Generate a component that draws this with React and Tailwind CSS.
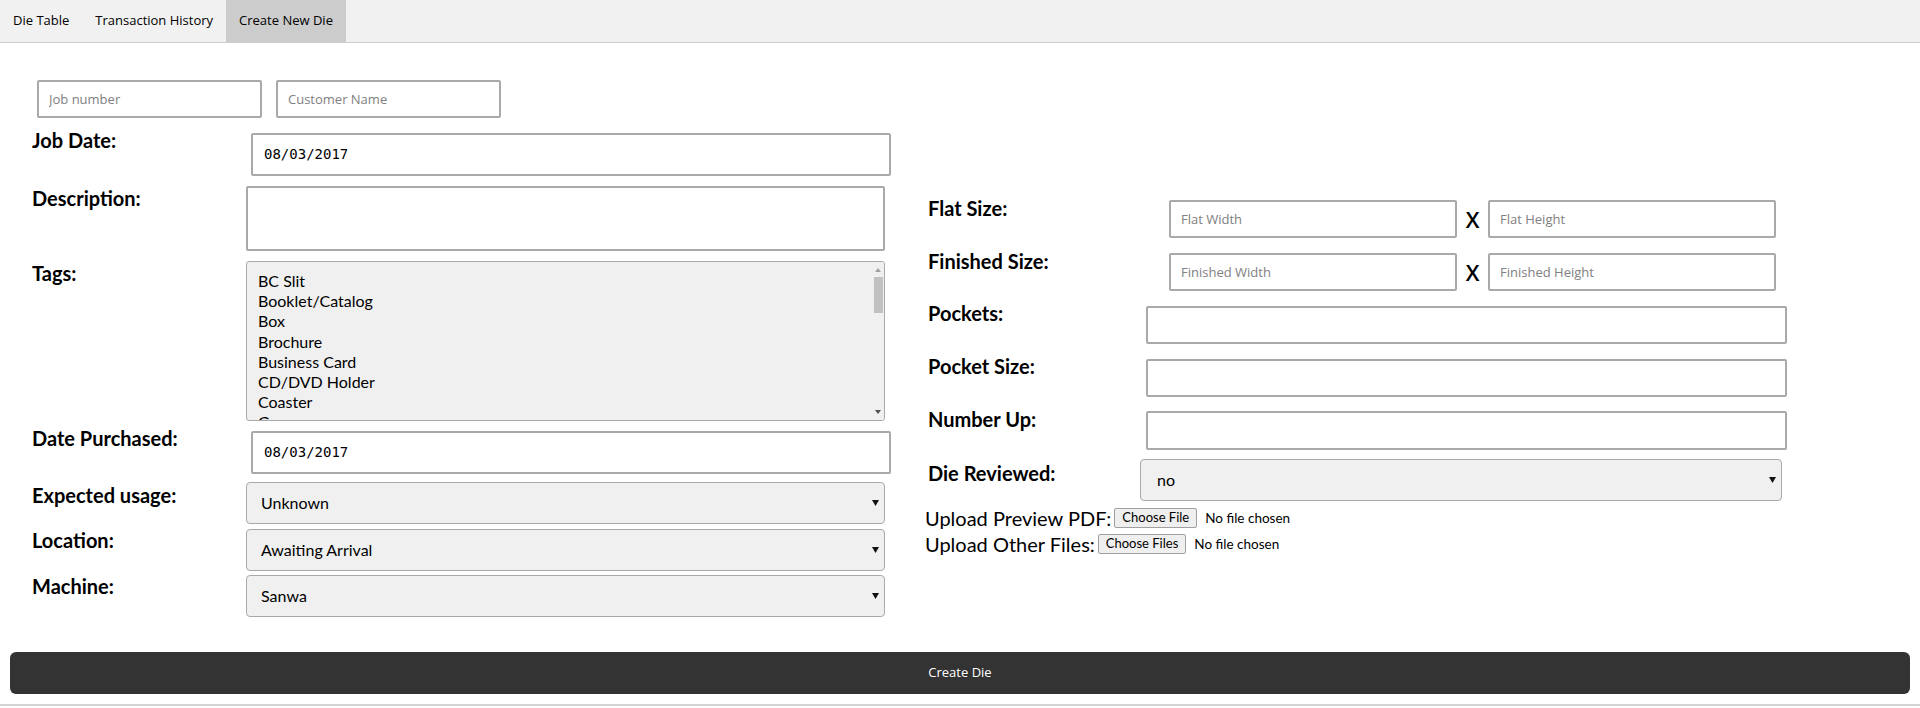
const ui = { fontFamily: '"Open Sans", "Liberation Sans", sans-serif' };
const lato = { fontFamily: 'Lato, "Open Sans", sans-serif' };
const mono = { fontFamily: '"DejaVu Sans Mono", "Liberation Mono", monospace' };

const tags = [
  "BC Slit",
  "Booklet/Catalog",
  "Box",
  "Brochure",
  "Business Card",
  "CD/DVD Holder",
  "Coaster",
  "Games",
];

function Caret() {
  return (
    <svg width="7" height="6" viewBox="0 0 7 6" className="shrink-0">
      <polygon points="0,0 7,0 3.5,6" fill="#111" />
    </svg>
  );
}

function Label({ children, className = "" }) {
  return (
    <div className={`text-[20px] leading-[24px] font-bold text-black shrink-0 ${className}`} style={lato}>
      {children}
    </div>
  );
}

function TextBox({ placeholder, className = "" }) {
  return (
    <input
      type="text"
      placeholder={placeholder}
      className={`border-2 border-[#a9a9a9] rounded-[2px] bg-white px-[10px] text-[13px] text-black placeholder:text-[#808080] outline-none ${className}`}
      style={ui}
    />
  );
}

function DateBox({ value, className = "" }) {
  return (
    <div
      className={`border-2 border-[#a9a9a9] rounded-[2px] bg-white pl-[11px] flex items-center text-[14px] text-black ${className}`}
      style={mono}
    >
      {value}
    </div>
  );
}

function SelectBox({ value, className = "" }) {
  return (
    <div
      className={`border border-[#a9a9a9] rounded-[4px] bg-[#f0f0f0] flex items-center justify-between pl-[14px] pr-[5px] text-[16px] text-black ${className}`}
      style={lato}
    >
      <span>{value}</span>
      <Caret />
    </div>
  );
}

function FileRow({ label, button }) {
  return (
    <div className="flex items-center h-[26px]">
      <span className="text-[20px] leading-[24px] text-black" style={lato}>
        {label}
      </span>
      <span
        className="ml-[3px] h-[20px] px-[7px] flex items-center border border-[#a0a0a0] rounded-[2px] bg-[#efefef] text-[13px] text-black"
        style={lato}
      >
        {button}
      </span>
      <span className="ml-[8px] text-[13.5px] text-black" style={lato}>
        No file chosen
      </span>
    </div>
  );
}

export default function App() {
  return (
    <div className="w-[1920px] h-[708px] bg-white overflow-hidden">
      {/* tabs */}
      <div className="flex h-[43px] bg-[#f1f1f1] border-b border-[#cccccc] text-[13px] text-black" style={ui}>
        <div className="px-[13px] flex items-center">Die Table</div>
        <div className="px-[13px] flex items-center">Transaction History</div>
        <div className="px-[13px] flex items-center bg-[#cccccc]">Create New Die</div>
      </div>

      <div className="pt-[37px]">
        <div className="flex gap-[14px] pl-[37px]">
          <TextBox placeholder="Job number" className="w-[225px] h-[38px]" />
          <TextBox placeholder="Customer Name" className="w-[225px] h-[38px]" />
        </div>

        <div className="flex mt-[15px]">
          {/* left column */}
          <div className="w-[925px] pl-[32px] flex flex-col">
            <div className="flex items-start">
              <Label className="w-[219px] mt-[-5px]">Job Date:</Label>
              <DateBox value="08/03/2017" className="w-[640px] h-[43px]" />
            </div>
            <div className="flex items-start mt-[10px]">
              <Label className="w-[214px]">Description:</Label>
              <div className="w-[639px] h-[65px] border-2 border-[#a9a9a9] rounded-[2px] bg-white" />
            </div>
            <div className="flex items-start mt-[10px]">
              <Label className="w-[214px]">Tags:</Label>
              <div className="relative w-[639px] h-[160px] border border-[#a9a9a9] rounded-[3px] bg-[#f0f0f0] overflow-hidden">
                <div className="pl-[11px] pt-[9px] text-[16px] leading-[20.2px] text-black" style={lato}>
                  {tags.map((t) => (
                    <div key={t}>{t}</div>
                  ))}
                </div>
                <div className="absolute right-0 top-0 bottom-0 w-[12px] bg-[#f0f0f0]">
                  <svg width="12" height="10" viewBox="0 0 12 10" className="absolute top-[3px] left-0">
                    <polygon points="3,7 9,7 6,3" fill="#a3a3a3" />
                  </svg>
                  <div className="absolute left-[2px] right-[1px] top-[15px] h-[36px] bg-[#c1c1c1]" />
                  <svg width="12" height="10" viewBox="0 0 12 10" className="absolute bottom-[3px] left-0">
                    <polygon points="3,3 9,3 6,7" fill="#505050" />
                  </svg>
                </div>
              </div>
            </div>
            <div className="flex items-start mt-[10px]">
              <Label className="w-[219px] mt-[-5px]">Date Purchased:</Label>
              <DateBox value="08/03/2017" className="w-[640px] h-[43px]" />
            </div>
            <div className="flex items-start mt-[8px]">
              <Label className="w-[214px] mt-[1px]">Expected usage:</Label>
              <SelectBox value="Unknown" className="w-[639px] h-[42px]" />
            </div>
            <div className="flex items-start mt-[5px]">
              <Label className="w-[214px] mt-[-1px]">Location:</Label>
              <SelectBox value="Awaiting Arrival" className="w-[639px] h-[42px]" />
            </div>
            <div className="flex items-start mt-[4px]">
              <Label className="w-[214px] mt-[-1px]">Machine:</Label>
              <SelectBox value="Sanwa" className="w-[639px] h-[42px]" />
            </div>
          </div>

          {/* right column */}
          <div className="pt-[67px] flex flex-col">
            <div className="flex items-start pl-[3px]">
              <Label className="w-[241px] mt-[-4px]">Flat Size:</Label>
              <TextBox placeholder="Flat Width" className="w-[288px] h-[38px]" />
              <span className="w-[31px] h-[38px] flex items-center justify-center text-[22px] font-semibold text-black" style={ui}>X</span>
              <TextBox placeholder="Flat Height" className="w-[288px] h-[38px]" />
            </div>
            <div className="flex items-start pl-[3px] mt-[15px]">
              <Label className="w-[241px] mt-[-4px]">Finished Size:</Label>
              <TextBox placeholder="Finished Width" className="w-[288px] h-[38px]" />
              <span className="w-[31px] h-[38px] flex items-center justify-center text-[22px] font-semibold text-black" style={ui}>X</span>
              <TextBox placeholder="Finished Height" className="w-[288px] h-[38px]" />
            </div>
            <div className="flex items-start pl-[3px] mt-[15px]">
              <Label className="w-[218px] mt-[-5px]">Pockets:</Label>
              <TextBox className="w-[641px] h-[38px]" />
            </div>
            <div className="flex items-start pl-[3px] mt-[15px]">
              <Label className="w-[218px] mt-[-5px]">Pocket Size:</Label>
              <TextBox className="w-[641px] h-[38px]" />
            </div>
            <div className="flex items-start pl-[3px] mt-[14px]">
              <Label className="w-[218px] mt-[-4px]">Number Up:</Label>
              <TextBox className="w-[641px] h-[39px]" />
            </div>
            <div className="flex items-start pl-[3px] mt-[9px]">
              <Label className="w-[212px] mt-[2px]">Die Reviewed:</Label>
              <SelectBox value="no" className="w-[642px] h-[42px] pl-[16px]" />
            </div>
            <div className="mt-[4px]">
              <FileRow label="Upload Preview PDF:" button="Choose File" />
              <FileRow label="Upload Other Files:" button="Choose Files" />
            </div>
          </div>
        </div>

        <div className="px-[10px] mt-[35px]">
          <div className="h-[42px] rounded-[6px] bg-[#333333] flex items-center justify-center text-[13px] text-white" style={ui}>
            Create Die
          </div>
        </div>
        <div className="mt-[10px] h-[2px] bg-[#d4d4d4]" />
      </div>
    </div>
  );
}
